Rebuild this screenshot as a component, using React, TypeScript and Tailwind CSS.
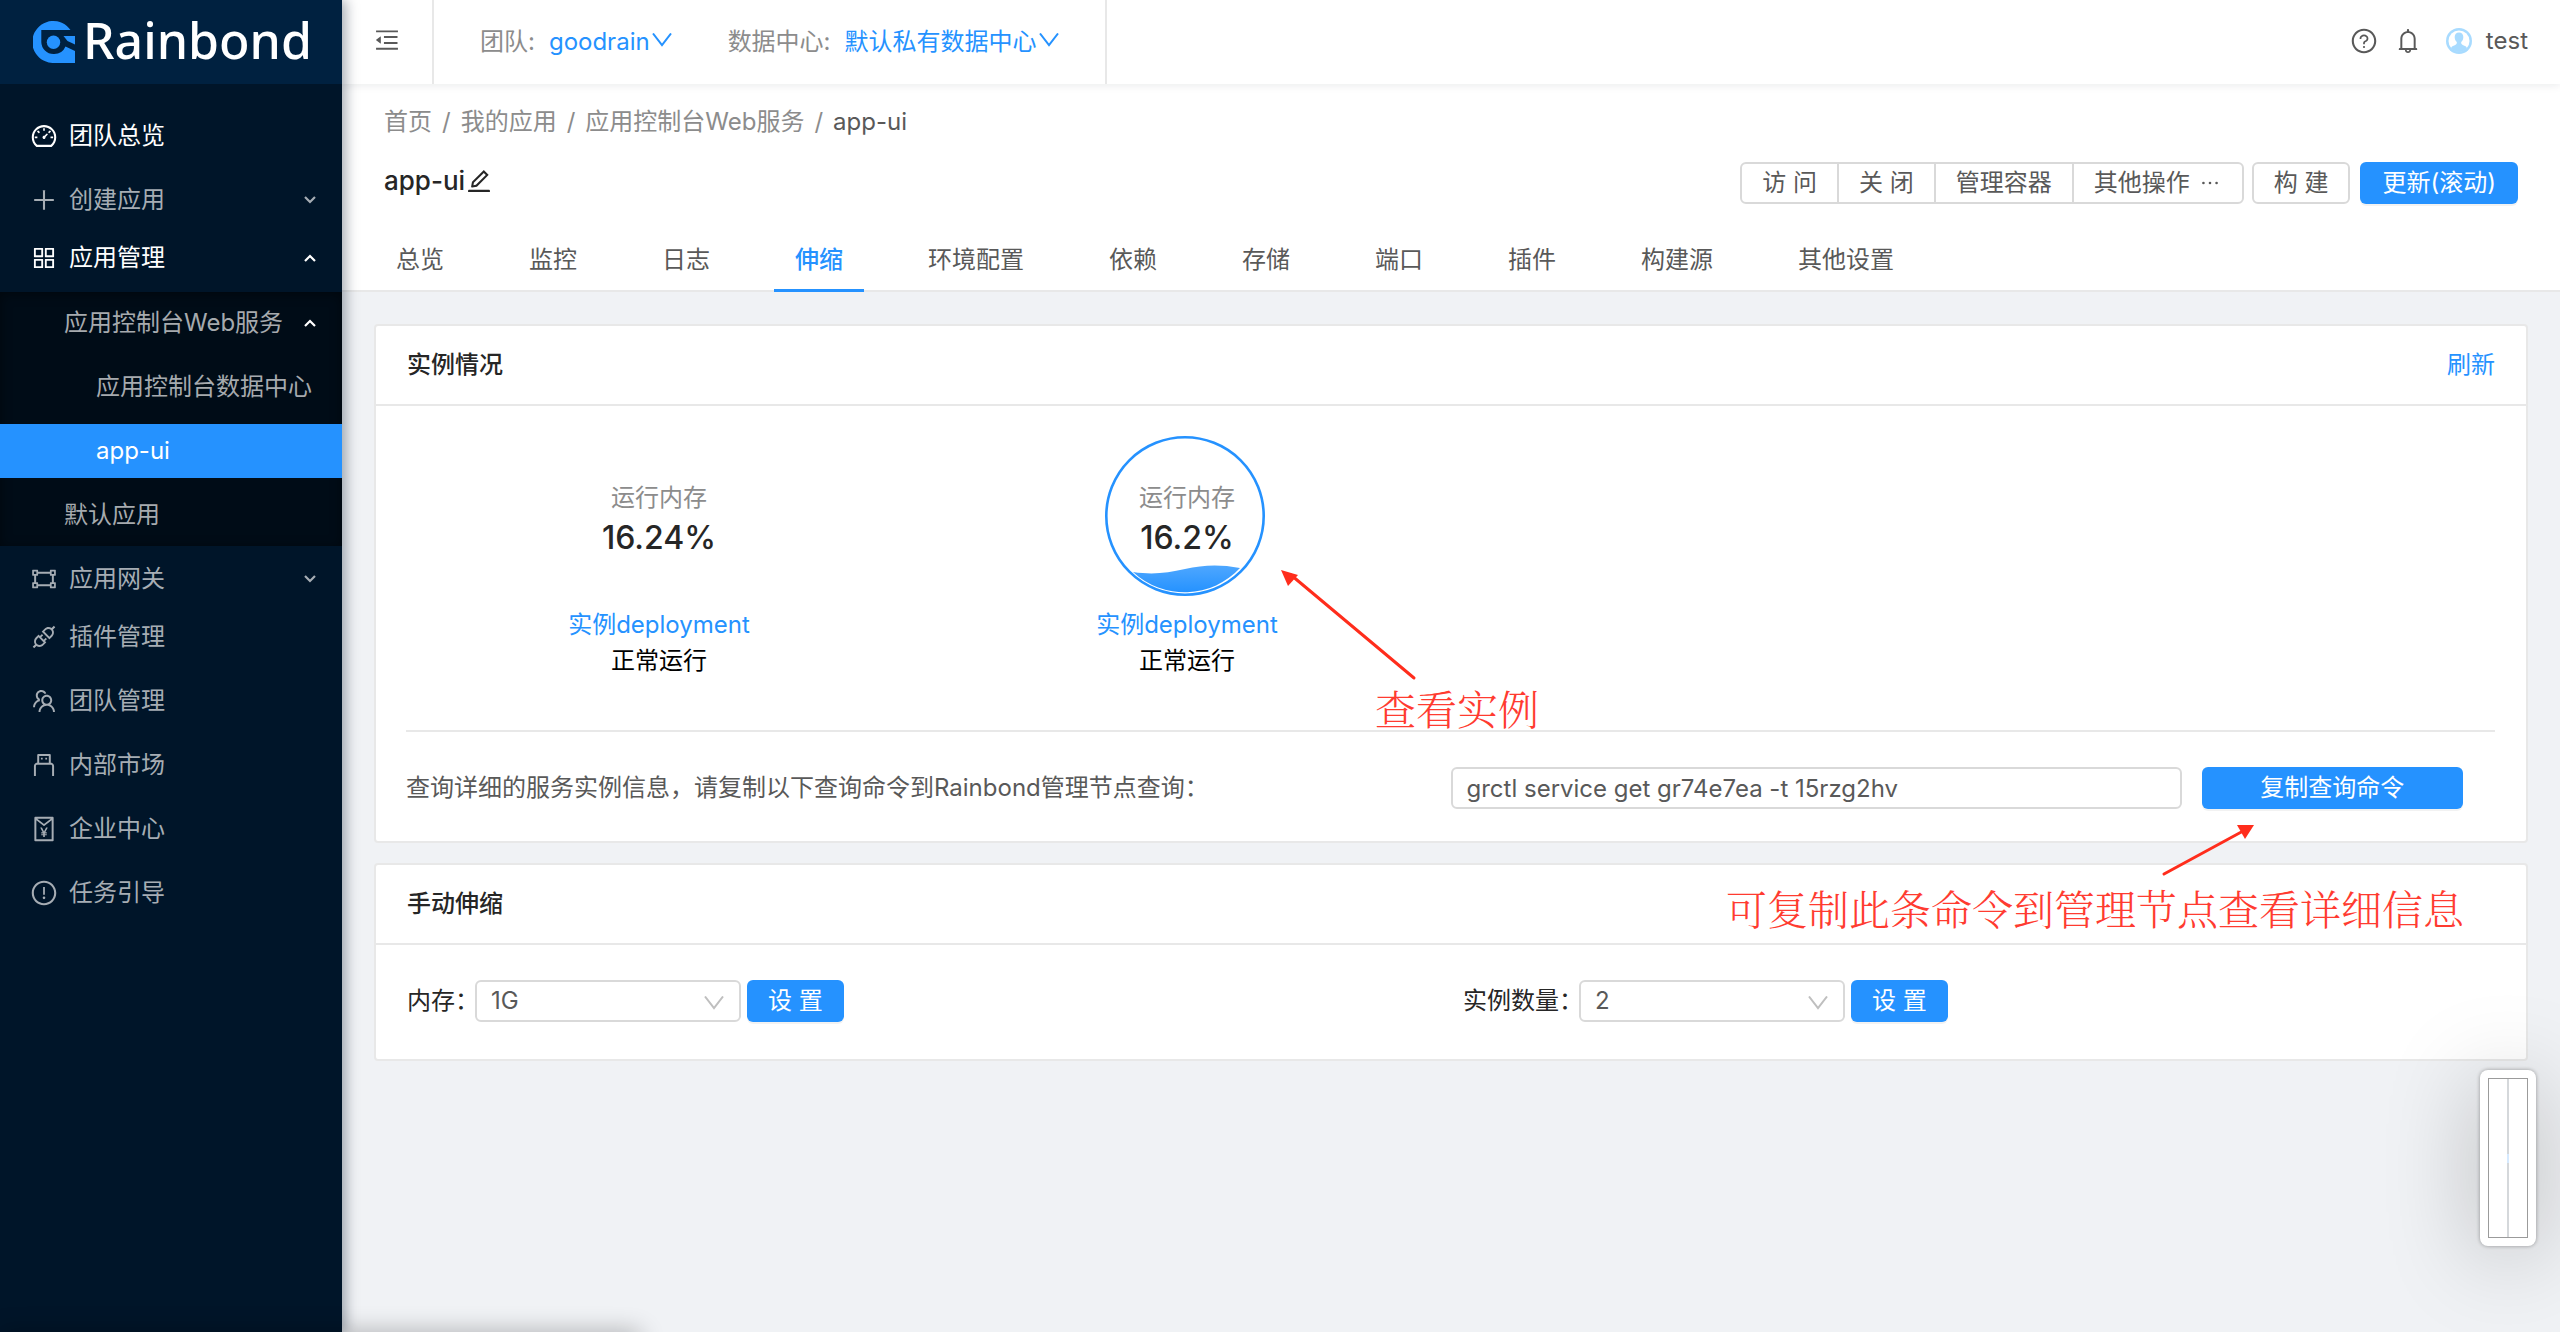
/**
 * Rainbond console — component "scaling" page
 * Sidebar navigation, top bar, page header with tabs, instance and scaling cards
 */

import type { ReactNode } from "react";
import type { IconType } from "react-icons";
import {
  AiOutlineApi,
  AiOutlineAppstore,
  AiOutlineBell,
  AiOutlineDashboard,
  AiOutlineEdit,
  AiOutlineEllipsis,
  AiOutlineExclamationCircle,
  AiOutlineGateway,
  AiOutlineMenuFold,
  AiOutlinePlus,
  AiOutlineQuestionCircle,
  AiOutlineRedEnvelope,
  AiOutlineTeam,
  AiOutlineUsb,
} from "react-icons/ai";

const TABS = [
  "总览",
  "监控",
  "日志",
  "伸缩",
  "环境配置",
  "依赖",
  "存储",
  "端口",
  "插件",
  "构建源",
  "其他设置",
];

const PRIMARY_BUTTON =
  "h-[42px] rounded-md bg-[#2592ff] text-white shadow-[0_2px_0_rgba(0,0,0,0.05)]";

function Logo() {
  return (
    <a href="#home" className="flex h-[84px] items-center gap-2 bg-[#002140] pl-[33px]">
      <svg viewBox="0 0 42 42" className="size-[42px] shrink-0" fill="#2592ff" aria-hidden="true">
        <path d="M37.5 9A21 21 0 1 0 21 42H42V30L32.5 25.5A12.5 12.5 0 0 1 20.5 33A12.2 12.2 0 0 1 8.3 21V9Z" />
        <path d="M30.5 15H42V23.5L34.5 20Z" />
        <circle cx="20.5" cy="21.3" r="6.7" />
      </svg>
      <span className="pb-1 font-['Noto_Sans'] text-[50px] leading-[80px] font-medium text-white">
        Rainbond
      </span>
    </a>
  );
}

function MenuArrow({ open }: { open?: boolean }) {
  return (
    <svg
      viewBox="0 0 12 8"
      className="ml-auto h-2 w-3 shrink-0"
      fill="none"
      stroke="currentColor"
      strokeWidth="2.2"
      aria-hidden="true"
    >
      <path d={open ? "M1 7L6 2L11 7" : "M1 1L6 6L11 1"} />
    </svg>
  );
}

function DownIcon({ className }: { className: string }) {
  return (
    <svg
      viewBox="0 0 20 14"
      className={`h-[14px] w-5 ${className}`}
      fill="none"
      stroke="currentColor"
      strokeWidth="2"
      aria-hidden="true"
    >
      <path d="M1 0.5L10 12.2L19 0.5" />
    </svg>
  );
}

interface MenuItemProps {
  label: string;
  icon?: IconType;
  arrow?: "up" | "down";
  className?: string;
}

function MenuItem({ label, icon: Icon, arrow, className = "pl-[30px] text-[#a6adb4]" }: MenuItemProps) {
  return (
    <a href="#menu" className={`flex h-[54px] items-center pr-[26px] whitespace-nowrap ${className}`}>
      {Icon && <Icon className="mr-[11px] size-7 shrink-0" />}
      <span>{label}</span>
      {arrow && <MenuArrow open={arrow === "up"} />}
    </a>
  );
}

function Sidebar() {
  return (
    <aside className="relative z-20 w-[342px] shrink-0 bg-[#001529] shadow-[4px_0_12px_rgba(0,21,41,0.35)]">
      <Logo />
      <nav className="pt-[25px]">
        <MenuItem label="团队总览" icon={AiOutlineDashboard} className="mb-[10px] pl-[30px] text-white" />
        <MenuItem label="创建应用" icon={AiOutlinePlus} arrow="down" className="mb-1 pl-[30px] text-[#a6adb4]" />
        <MenuItem label="应用管理" icon={AiOutlineAppstore} arrow="up" className="mb-[7px] pl-[30px] text-white" />
        <div className="flex flex-col gap-[10px] bg-[#000c17] py-1 shadow-[inset_0_2px_12px_rgba(0,0,0,0.45)]">
          <a href="#app" className="flex h-[54px] items-center pr-[26px] pl-16 text-[#a6aaae]">
            应用控制台Web服务
            <span className="ml-auto text-white">
              <MenuArrow open />
            </span>
          </a>
          <MenuItem label="应用控制台数据中心" className="pl-24 text-[#a6aaae]" />
          <MenuItem label="app-ui" className="bg-[#2592ff] pl-24 text-white" />
          <MenuItem label="默认应用" className="pl-16 text-[#a6aaae]" />
        </div>
        <div className="pt-[6px]">
          <MenuItem label="应用网关" icon={AiOutlineGateway} arrow="down" />
        </div>
        <div className="flex flex-col gap-[10px] pt-1">
          <MenuItem label="插件管理" icon={AiOutlineApi} />
          <MenuItem label="团队管理" icon={AiOutlineTeam} />
          <MenuItem label="内部市场" icon={AiOutlineUsb} />
          <MenuItem label="企业中心" icon={AiOutlineRedEnvelope} />
          <MenuItem label="任务引导" icon={AiOutlineExclamationCircle} />
        </div>
      </nav>
    </aside>
  );
}

function Avatar() {
  return (
    <svg viewBox="0 0 26 26" className="ml-6 size-[26px]" aria-hidden="true">
      <circle cx="13" cy="13" r="13" fill="#a8dbff" />
      <circle cx="13" cy="13" r="10.5" fill="#fff" />
      <path
        d="M13 4.5C10 4.5 8.5 6.6 8.7 9.4C8.8 11.4 9.8 13 10.8 14C11 16.5 10 17 7 18C5.5 18.6 5 20 5 20.5A11 11 0 0 0 21 20.5C21 20 20.5 18.6 19 18C16 17 15 16.5 15.2 14C16.2 13 17.2 11.4 17.3 9.4C17.5 6.6 16 4.5 13 4.5Z"
        fill="#a8dbff"
      />
    </svg>
  );
}

function TopBar() {
  return (
    <header className="relative z-10 flex h-[84px] bg-white text-[#8c8c8c] shadow-[0_2px_8px_rgba(0,21,41,0.08)]">
      <button aria-label="收起菜单" className="w-[92px] border-r-2 border-[#e8e8e8] pl-[31px] text-[#595959]">
        <AiOutlineMenuFold className="mb-1 size-7" />
      </button>
      <div className="flex items-center border-r-2 border-[#e8e8e8] pr-[46px] pl-[46px]">
        <span>团队:</span>
        <a href="#team" className="ml-[14px] flex items-center text-[#2592ff]">
          goodrain
          <DownIcon className="mb-1 ml-0.5" />
        </a>
        <span className="ml-14">数据中心:</span>
        <a href="#region" className="ml-[14px] flex items-center text-[#2592ff]">
          默认私有数据中心
          <DownIcon className="mb-1 ml-0.5" />
        </a>
      </div>
      <div className="ml-auto flex items-center pr-8 pb-0.5 text-[#595959]">
        <button aria-label="帮助">
          <AiOutlineQuestionCircle className="size-7" />
        </button>
        <button aria-label="通知" className="ml-4">
          <AiOutlineBell className="size-7" />
        </button>
        <Avatar />
        <span className="ml-[14px]">test</span>
      </div>
    </header>
  );
}

function ActionBar() {
  const groupItem = "h-[42px] border-2 border-[#d9d9d9] bg-white px-5";
  return (
    <div className="flex text-[#595959]">
      <button className={`${groupItem} rounded-l-md`}>访 问</button>
      <button className={`${groupItem} -ml-0.5`}>关 闭</button>
      <button className={`${groupItem} -ml-0.5`}>管理容器</button>
      <button className={`${groupItem} -ml-0.5 flex items-center gap-2 rounded-r-md`}>
        其他操作
        <AiOutlineEllipsis className="size-6" />
      </button>
      <button className={`${groupItem} ml-2 rounded-md`}>构 建</button>
      <button className={`${PRIMARY_BUTTON} ml-[10px] px-[22px]`}>更新(滚动)</button>
    </div>
  );
}

function PageHeader() {
  return (
    <section className="border-b-2 border-[#e8e8e8] bg-white">
      <div className="px-[42px] pt-5">
        <nav className="flex gap-[10px] text-[#8c8c8c]">
          <a href="#home">首页</a>
          <span>/</span>
          <a href="#apps">我的应用</a>
          <span>/</span>
          <a href="#app">应用控制台Web服务</a>
          <span>/</span>
          <span className="text-[#595959]">app-ui</span>
        </nav>
        <div className="flex items-start justify-between pt-[22px]">
          <h1 className="flex items-center text-[26px] leading-[38px] font-medium text-[#262626]">
            app-ui
            <button aria-label="编辑名称">
              <AiOutlineEdit className="size-7" />
            </button>
          </h1>
          <ActionBar />
        </div>
      </div>
      <div className="flex gap-[43px] pt-[26px] pl-[33px]">
        {TABS.map((tab) => (
          <button
            key={tab}
            className={
              tab === "伸缩"
                ? "-mb-0.5 h-[62px] border-b-3 border-[#2592ff] px-[21px] font-medium text-[#2592ff]"
                : "-mb-0.5 h-[62px] border-b-3 border-transparent px-[21px] text-[#595959]"
            }
          >
            {tab}
          </button>
        ))}
      </div>
    </section>
  );
}

interface CardProps {
  title: string;
  extra?: ReactNode;
  children: ReactNode;
}

function Card({ title, extra, children }: CardProps) {
  return (
    <section className="relative rounded-sm border-2 border-[#e8e8e8] bg-white">
      <div className="flex h-20 items-center justify-between border-b-2 border-[#e8e8e8] px-[31px]">
        <h2 className="font-medium text-[#262626]">{title}</h2>
        {extra}
      </div>
      {children}
    </section>
  );
}

function WaterWave() {
  return (
    <svg viewBox="0 0 160 160" className="absolute top-0 right-0.5 size-40" aria-hidden="true">
      <defs>
        <linearGradient id="water" x1="0" y1="0" x2="0" y2="1">
          <stop offset="0" stopColor="#4ea7ff" />
          <stop offset="1" stopColor="#2592ff" />
        </linearGradient>
      </defs>
      <circle cx="80" cy="80" r="78.7" fill="none" stroke="#2592ff" strokeWidth="2.6" />
      <path d="M28 136C48 139 62 137 80 133C98 129 114 128 135 132A75.5 75.5 0 0 1 28 136Z" fill="url(#water)" />
    </svg>
  );
}

function Instance({ percent, wave }: { percent: string; wave?: boolean }) {
  return (
    <div className="relative flex flex-col items-center pt-[30px] pb-[51px]">
      <div className="relative flex size-40 flex-col items-center pt-11">
        {wave && <WaterWave />}
        <span className="relative leading-9 text-[#8c8c8c]">运行内存</span>
        <span className="relative text-[32px] leading-[44px] font-medium text-[#262626]">{percent}</span>
      </div>
      <a href="#pod" className="mt-[11px] leading-9 text-[#2592ff]">
        实例deployment
      </a>
      <span className="leading-9 text-black">正常运行</span>
      {wave && (
        <div className="absolute top-[159px] left-1/2 ml-[92px] text-[#ff3b30]">
          <svg viewBox="0 0 144 116" className="h-[116px] w-36" aria-hidden="true">
            <path d="M12 10L135 113" stroke="#ff2d1c" strokeWidth="3" strokeLinecap="round" />
            <path d="M2 5L19 10L9 21Z" fill="#ff2d1c" />
          </svg>
          <span className="block pl-24 text-[41px] leading-[54px] font-light whitespace-nowrap font-['Noto_Serif_CJK_SC','Noto_Sans_CJK_SC',serif]">
            查看实例
          </span>
        </div>
      )}
    </div>
  );
}

function InstanceCard() {
  return (
    <Card title="实例情况" extra={<a href="#refresh" className="text-[#2592ff]">刷新</a>}>
      <div className="grid grid-cols-4 px-[19px]">
        <Instance percent="16.24%" />
        <Instance percent="16.2%" wave />
      </div>
      <div className="mr-[31px] ml-[30px] flex items-center border-t-2 border-[#e8e8e8] pt-[35px] pb-8 text-[#595959]">
        <label htmlFor="command" className="w-1/2">
          查询详细的服务实例信息，请复制以下查询命令到Rainbond管理节点查询：
        </label>
        <input
          id="command"
          readOnly
          value="grctl service get gr74e7ea -t 15rzg2hv"
          className="h-[42px] w-[35%] rounded-md border-2 border-[#d9d9d9] px-[14px]"
        />
        <button className={`${PRIMARY_BUTTON} ml-5 w-[12.5%]`}>复制查询命令</button>
      </div>
      <svg viewBox="0 0 96 56" className="absolute right-[269px] -bottom-9 z-10 h-14 w-24" aria-hidden="true">
        <path d="M3 53L84 9" stroke="#ff2d1c" strokeWidth="3" strokeLinecap="round" />
        <path d="M93 4L76 4L84 18Z" fill="#ff2d1c" />
      </svg>
    </Card>
  );
}

function ScaleField({ id, label, value }: { id: string; label: string; value: string }) {
  return (
    <div className="flex items-center px-3">
      <label htmlFor={id} className="-mr-1 text-[#262626]">
        {label}
      </label>
      <div className="relative w-[266px]">
        <select
          id={id}
          defaultValue={value}
          className="block h-[42px] w-full appearance-none rounded-md border-2 border-[#d9d9d9] bg-white px-[14px] text-[#595959]"
        >
          <option>{value}</option>
        </select>
        <DownIcon className="pointer-events-none absolute top-4 right-[17px] text-[#bfbfbf]" />
      </div>
      <button className={`${PRIMARY_BUTTON} ml-[6px] px-[21px]`}>设 置</button>
    </div>
  );
}

function ScaleCard() {
  return (
    <Card title="手动伸缩">
      <div className="grid grid-cols-2 px-[19px] pt-[35px] pb-[37px]">
        <ScaleField id="memory" label="内存：" value="1G" />
        <ScaleField id="replicas" label="实例数量：" value="2" />
      </div>
      <span className="absolute top-4 right-[62px] text-[41px] leading-[54px] font-light whitespace-nowrap text-[#ff3b30] font-['Noto_Serif_CJK_SC','Noto_Sans_CJK_SC',serif]">
        可复制此条命令到管理节点查看详细信息
      </span>
    </Card>
  );
}

function FloatingPanel() {
  return (
    <div className="fixed right-6 bottom-[86px] z-30 h-44 w-14 rounded-lg bg-white p-2 shadow-[0_0_4px_rgba(0,0,0,0.35),0_10px_90px_rgba(0,0,0,0.25)]">
      <div className="flex h-full justify-center border border-[#9b9b9b]">
        <div className="flex w-0.5 items-center bg-[#d5d8db]">
          <div className="h-[9px] w-full bg-[#d6eaff]" />
        </div>
      </div>
    </div>
  );
}

export default function App() {
  return (
    <div className="flex min-h-screen overflow-hidden bg-[#f0f2f5] font-[Inter,'Noto_Sans_CJK_SC',sans-serif] text-[24px] leading-9">
      <Sidebar />
      <div className="min-w-0 flex-1">
        <TopBar />
        <PageHeader />
        <main className="flex flex-col gap-5 py-8 pr-8 pl-8">
          <InstanceCard />
          <ScaleCard />
        </main>
      </div>
      <FloatingPanel />
      <div className="fixed top-full left-0 z-30 h-5 w-1/4 shadow-[0_0_24px_rgba(0,0,0,0.3)]" />
    </div>
  );
}
